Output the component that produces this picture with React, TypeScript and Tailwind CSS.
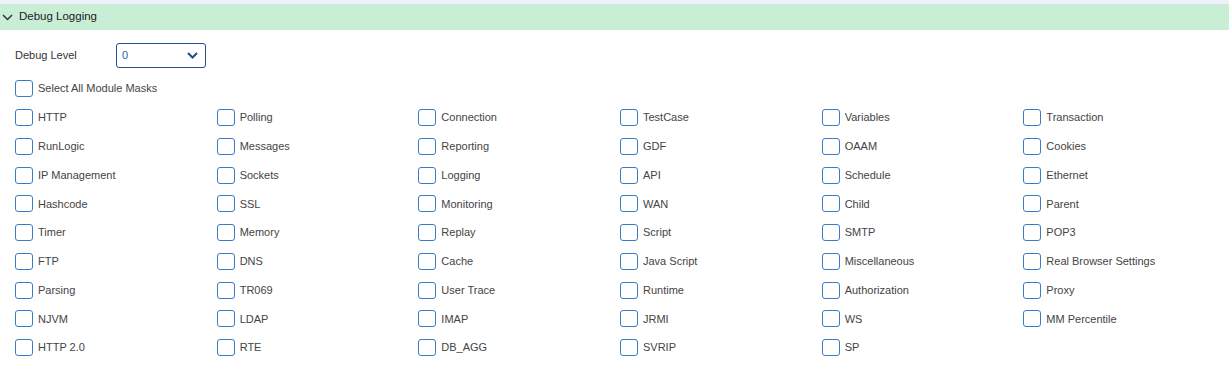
import { useState } from 'react';

const MODULES = [
  ['HTTP', 'Polling', 'Connection', 'TestCase', 'Variables', 'Transaction'],
  ['RunLogic', 'Messages', 'Reporting', 'GDF', 'OAAM', 'Cookies'],
  ['IP Management', 'Sockets', 'Logging', 'API', 'Schedule', 'Ethernet'],
  ['Hashcode', 'SSL', 'Monitoring', 'WAN', 'Child', 'Parent'],
  ['Timer', 'Memory', 'Replay', 'Script', 'SMTP', 'POP3'],
  ['FTP', 'DNS', 'Cache', 'Java Script', 'Miscellaneous', 'Real Browser Settings'],
  ['Parsing', 'TR069', 'User Trace', 'Runtime', 'Authorization', 'Proxy'],
  ['NJVM', 'LDAP', 'IMAP', 'JRMI', 'WS', 'MM Percentile'],
  ['HTTP 2.0', 'RTE', 'DB_AGG', 'SVRIP', 'SP'],
].flat();

function Check({ label, checked, onToggle }: { label: string; checked: boolean; onToggle: () => void }) {
  return (
    <label className="flex items-center h-[28.75px] cursor-pointer select-none" onClick={onToggle}>
      <span
        className={`shrink-0 w-[18px] h-[17px] rounded-[3px] border-[1.5px] border-[#3b7cc8] ${
          checked ? 'bg-[#3b7cc8]' : 'bg-white'
        }`}
      />
      <span className="ml-[5px] text-[11px] text-[#444] whitespace-nowrap">{label}</span>
    </label>
  );
}

export default function App() {
  const [checked, setChecked] = useState<Record<string, boolean>>({});
  const allOn = MODULES.every((m) => checked[m]);

  const toggle = (m: string) => setChecked((c) => ({ ...c, [m]: !c[m] }));
  const toggleAll = () =>
    setChecked(Object.fromEntries(MODULES.map((m) => [m, !allOn])));

  return (
    <div className="w-[1229px] h-[369px] bg-white font-['Liberation_Sans',Arial,sans-serif] overflow-hidden">
      <div className="h-[4px] bg-[#eef0fb]" />

      {/* Section header */}
      <div className="h-[26px] bg-[#c8eed6] flex items-center">
        <svg width="11" height="7" viewBox="0 0 11 7" className="ml-[2px]">
          <path d="M1 1l4.5 4.5L10 1" fill="none" stroke="#333" strokeWidth="1.5" />
        </svg>
        <span className="ml-[6px] text-[11.5px] text-[#222]">Debug Logging</span>
      </div>

      <div className="pl-[15px] pr-[4px]">
        {/* Debug level */}
        <div className="flex items-center mt-[13px]">
          <span className="w-[101px] text-[11px] text-[#333]">Debug Level</span>
          <div className="w-[90px] h-[25px] border border-[#1d4f91] rounded-[3px] flex items-center justify-between pl-[5px] pr-[7px]">
            <span className="text-[11px] text-[#2b5ea7]">0</span>
            <svg width="11" height="7" viewBox="0 0 11 7">
              <path d="M1 1l4.5 4.5L10 1" fill="none" stroke="#1d4f91" strokeWidth="2" />
            </svg>
          </div>
        </div>

        <div className="mt-[6px]">
          <Check label="Select All Module Masks" checked={allOn} onToggle={toggleAll} />
        </div>

        <div className="grid grid-cols-6 mt-[0.5px]">
          {MODULES.map((m) => (
            <Check key={m} label={m} checked={!!checked[m]} onToggle={() => toggle(m)} />
          ))}
        </div>
      </div>
    </div>
  );
}
